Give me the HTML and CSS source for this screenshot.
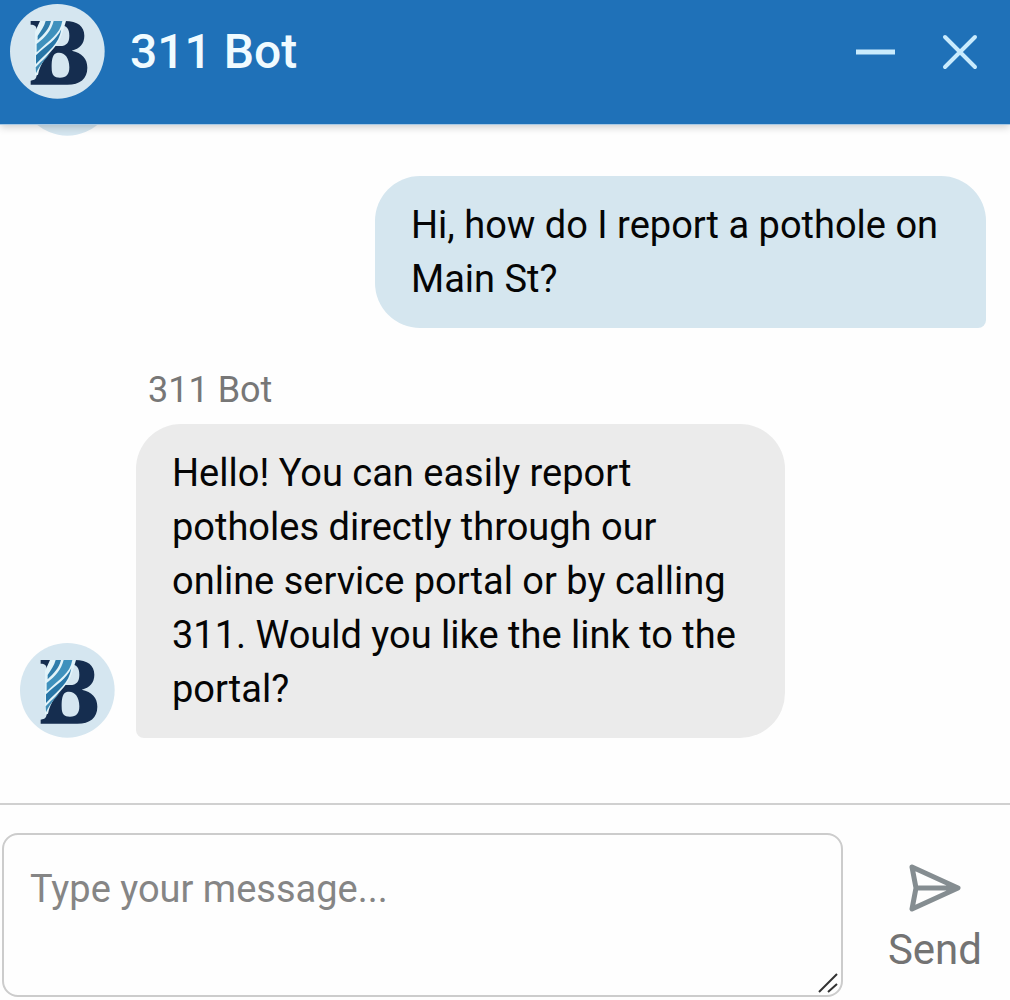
FILE: index.html
```html
<!DOCTYPE html>
<html lang="en">
<head>
  <meta charset="UTF-8" />
  <meta name="viewport" content="width=device-width, initial-scale=1.0"/>
  <title>311 Bot</title>
  <link rel="stylesheet" href="styles.css">
</head>
<body>

  <!-- shared logo -->
  <svg width="0" height="0" class="sprite" aria-hidden="true">
    <symbol id="logo" viewBox="0 0 285 285">
      <circle cx="142" cy="142" r="142" fill="#d5e6f0"/>
      <path fill="#152d4f" fill-rule="evenodd" d="M62 51H165C203 51 223 67 223 95C223 119 209 134 185 140C216 146 232 164 232 191C232 224 210 242 172 242H62V230C76 229 80 222 80 211V80C80 66 74 62 62 62ZM150 64C150 88 143 108 132 126H150C170 126 178 115 178 95C178 75 171 64 150 64ZM134 150C125 160 125 176 125 192C125 213 132 221 150 221C170 221 178 211 178 190C178 162 165 146 147 146C142 146 138 147 134 150Z"/>
      <path fill="#e2f3f9" d="M90 51H168C158 84 153 109 132 132C110 156 91 177 84 212L75 216V84Z"/>
      <path fill="#2f7dab" d="M83 96C92 82 103 67 107 51H123C117 76 101 91 83 109Z"/>
      <path fill="#3f91bd" d="M80 120C108 99 124 78 131 51H157C150 92 119 107 80 145Z"/>
      <path fill="#2876a7" d="M78 154C111 123 139 108 154 76C146 122 119 138 78 180Z"/>
      <path fill="#3f8bb5" d="M77 190C98 168 112 157 128 139C113 160 92 177 78 208Z"/>
    </symbol>
  </svg>

  <div class="chat">
    <header class="chat-header">
      <svg class="avatar" role="img" aria-label="311 Bot logo"><use href="#logo"/></svg>
      <h1>311 Bot</h1>
      <button type="button" class="icon-btn" aria-label="Minimize">
        <svg width="40" height="40" viewBox="0 0 40 40"><path d="M1 20H40" stroke="#c9ebfd" stroke-width="5"/></svg>
      </button>
      <button type="button" class="icon-btn" aria-label="Close">
        <svg width="40" height="40" viewBox="0 0 40 40"><path d="M5 5L35 35M35 5L5 35" stroke="#c9ebfd" stroke-width="4" stroke-linecap="round"/></svg>
      </button>
    </header>

    <main class="messages">
      <div class="row bot">
        <svg class="avatar" aria-hidden="true"><use href="#logo"/></svg>
      </div>

      <div class="row user">
        <p class="bubble">Hi, how do I report a pothole on Main St?</p>
      </div>

      <div class="row bot">
        <svg class="avatar" aria-hidden="true"><use href="#logo"/></svg>
        <div class="message">
          <span class="sender">311 Bot</span>
          <p class="bubble">Hello! You can easily report potholes directly through our online service portal or by calling 311. Would you like the link to the portal?</p>
        </div>
      </div>
    </main>

    <form class="composer">
      <div class="input-wrap">
        <textarea id="message" name="message" aria-label="Message" placeholder="Type your message..."></textarea>
        <svg class="grip" width="20" height="20" viewBox="0 0 20 20" aria-hidden="true"><path d="M1 19L19 1M10 19L19 11" stroke="#333" stroke-width="2"/></svg>
      </div>
      <button type="button" class="send-btn">
        <svg width="52" height="48" viewBox="0 0 52 48"><path d="M3 3L49 24L3 45L7 24ZM7 24H47" fill="none" stroke="#858d91" stroke-width="5" stroke-linejoin="round"/></svg>
        Send
      </button>
    </form>
  </div>

</body>
</html>
```
FILE: styles.css
```css
* {
  box-sizing: border-box;
}

body {
  margin: 0;
  font-family: Roboto, Arial, sans-serif;
  background-color: #fefefe;
  color: #050505;
}

button {
  background: none;
  border: none;
  padding: 0;
  font-family: inherit;
  cursor: pointer;
}

svg {
  display: block;
}

.sprite {
  position: absolute;
}

.chat {
  display: flex;
  flex-direction: column;
  height: 100vh;
}

.chat-header {
  display: flex;
  align-items: center;
  padding: 4px 30px 25px 10px;
  background-color: #1f71b8;
  border-bottom: 1px solid #a9c9e4;
  box-shadow: 0 2px 8px rgba(0, 0, 0, 0.2);
  z-index: 1;
}

.chat-header h1 {
  flex: 1;
  margin: 0 0 0 25px;
  font-size: 48px;
  font-weight: 500;
  line-height: 56px;
  color: #f0fbff;
}

.icon-btn {
  margin-left: 45px;
}

.avatar {
  flex: none;
  width: 95px;
  height: 95px;
}

.messages {
  flex: 1;
  min-height: 0;
  display: flex;
  flex-direction: column;
  justify-content: flex-end;
  gap: 40px;
  padding: 0 24px 65px 20px;
  overflow: hidden;
}

.row {
  display: flex;
  align-items: flex-end;
  gap: 21px;
}

.user {
  justify-content: flex-end;
}

.bubble {
  margin: 0;
  padding: 22px 36px;
  border-radius: 45px;
  font-size: 38px;
  line-height: 54px;
}

.user .bubble {
  max-width: 611px;
  background-color: #d5e6ef;
  border-bottom-right-radius: 8px;
}

.bot .bubble {
  max-width: 649px;
  background-color: #ebebeb;
  border-bottom-left-radius: 8px;
}

.sender {
  display: block;
  margin: 0 0 12px 12px;
  font-size: 36px;
  line-height: 44px;
  color: #777;
}

.composer {
  display: flex;
  align-items: stretch;
  gap: 45px;
  padding: 28px 28px 3px 2px;
  border-top: 2px solid #d0d0d0;
}

.input-wrap {
  flex: 1;
  position: relative;
}

textarea {
  display: block;
  width: 100%;
  height: 164px;
  padding: 30px 26px;
  border: 2px solid #ccc;
  border-radius: 16px;
  background-color: #fefefe;
  font-family: inherit;
  font-size: 38px;
  line-height: 48px;
  resize: none;
}

textarea::placeholder {
  color: #858585;
}

.grip {
  position: absolute;
  right: 5px;
  bottom: 4px;
}

.send-btn {
  display: flex;
  flex-direction: column;
  align-items: center;
  justify-content: flex-end;
  gap: 14px;
  padding-bottom: 23px;
  font-size: 42px;
  line-height: 48px;
  color: #737373;
}
```
